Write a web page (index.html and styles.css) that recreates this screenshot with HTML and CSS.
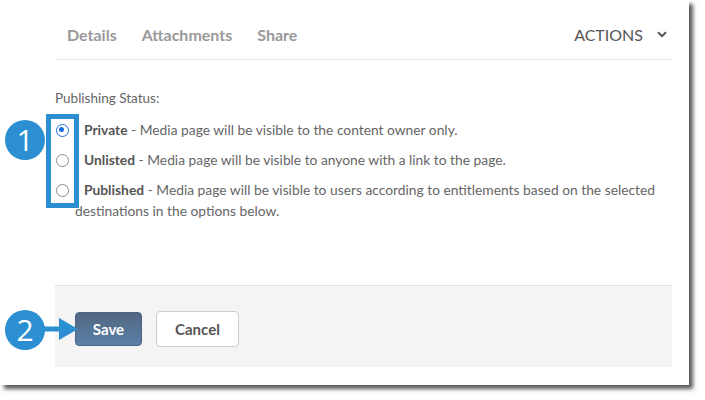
FILE: index.html
```html
<!DOCTYPE html>
<html>
<head>
<meta charset="utf-8">
<link rel="stylesheet" href="styles.css">
</head>
<body>
<div class="shot">
  <div class="panel">
    <div class="tabs">
      <span class="tab">Details</span>
      <span class="tab">Attachments</span>
      <span class="tab">Share</span>
      <span class="actions">ACTIONS
        <svg class="chev" width="10" height="7" viewBox="0 0 10 7"><path d="M1 1.2 L5 5.2 L9 1.2" fill="none" stroke="#555" stroke-width="2"/></svg>
      </span>
    </div>
    <div class="body">
      <div class="status-label">Publishing Status:</div>
      <div class="opt"><span class="radio on"></span><b>Private</b> - Media page will be visible to the content owner only.</div>
      <div class="opt"><span class="radio"></span><b>Unlisted</b> - Media page will be visible to anyone with a link to the page.</div>
      <div class="opt"><span class="radio"></span><b>Published</b> - Media page will be visible to users according to entitlements based on the selected destinations in the options below.</div>
    </div>
    <div class="footer">
      <button class="btn save">Save</button>
      <button class="btn cancel">Cancel</button>
    </div>
  </div>
  <div class="hl-box"></div>
  <div class="callout c1">1</div>
  <div class="callout c2">2</div>
  <svg class="arrow" width="36" height="22" viewBox="0 0 36 22"><rect x="0" y="8.5" width="20" height="5" fill="#2b8fd1"/><polygon points="17,0 36,11 17,22" fill="#2b8fd1"/></svg>
</div>
</body>
</html>
```
FILE: styles.css
```css
html, body { margin: 0; padding: 0; background: #fff; }
body { font-family: Lato, "Open Sans", sans-serif; width: 705px; height: 400px; overflow: hidden; }
.shot {
  position: relative;
  width: 689px;
  height: 385px;
  background: #fff;
  box-shadow: 4px 4px 4px rgba(0,0,0,0.65);
}
.panel { margin-left: 55px; width: 617px; }
.tabs {
  height: 60px;
  border-bottom: 1px solid #e6e6e6;
  display: flex;
  align-items: center;
  padding-left: 12px;
  box-sizing: border-box;
  padding-top: 9px;
}
.tab { font-weight: 700; font-size: 16px; color: #999; margin-right: 25px; }
.actions { margin-left: auto; font-size: 16px; color: #555; display: flex; align-items: center; margin-right: 5px; }
.chev { margin-left: 14px; }
.body { padding-top: 28px; font-size: 13.8px; color: #666; }
.status-label { line-height: 20px; margin-bottom: 11px; font-size: 13.5px; }
.opt { line-height: 21px; padding-left: 20px; text-indent: -19px; margin-bottom: 9px; color: #666; }
.opt b { color: #555; font-weight: 700; }
.radio {
  display: inline-block;
  width: 13px; height: 13px;
  box-sizing: border-box;
  border: 1.8px solid #8a8a96;
  border-radius: 50%;
  vertical-align: -2px;
  margin-right: 15px;
  text-indent: 0;
  position: relative;
}
.radio.on { border-color: #1a6fe0; }
.radio.on::after {
  content: "";
  position: absolute;
  left: 2px; top: 2px;
  width: 5.4px; height: 5.4px;
  border-radius: 50%;
  background: #1a6fe0;
}
.footer {
  margin-top: 64px;
  height: 82px;
  background: #f4f4f4;
  border-top: 1px solid #e3e3e3;
  box-sizing: border-box;
  padding: 25px 0 0 20px;
  display: flex;
  align-items: flex-start;
}
.btn { font-family: Lato, sans-serif; font-weight: 700; font-size: 15px; border-radius: 4px; cursor: pointer; }
.save {
  width: 67px; height: 34px;
  color: #fff;
  background: linear-gradient(#526781, #5b80a8);
  border: 1px solid #4a6383;
  margin-right: 14px;
  margin-top: 1px;
}
.cancel {
  width: 83px; height: 36px;
  color: #555;
  background: #fff;
  border: 1px solid #ccc;
}
.hl-box {
  position: absolute;
  left: 46px; top: 114px;
  width: 33px; height: 94px;
  box-sizing: border-box;
  border: 5px solid #2b8fd1;
}
.callout {
  position: absolute;
  width: 40px; height: 40px;
  border-radius: 50%;
  background: #2b8fd1;
  color: #fff;
  font-family: "Open Sans", Lato, sans-serif;
  font-size: 30px;
  line-height: 40px;
  text-align: center;
}
.c1 { left: 5px; top: 120px; }
.c2 { left: 5px; top: 310px; }
.arrow { position: absolute; left: 42px; top: 318px; }
```
